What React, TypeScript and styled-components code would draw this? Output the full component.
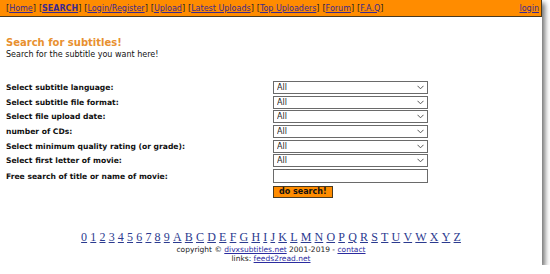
import React from "react";
import styled, { createGlobalStyle } from "styled-components";

const GlobalStyle = createGlobalStyle`
  html, body { margin: 0; padding: 0; background: #ffffff; }
  body { font-family: "DejaVu Sans", Verdana, sans-serif; }
`;

const Window = styled.div`
  width: 542px;
  height: 265px;
  background: #fff;
  box-shadow: 3px 3px 5px rgba(0, 0, 0, 0.55);
  display: flex;
  flex-direction: column;
`;

const TopBar = styled.div`
  height: 16px;
  background: #ff8c00;
  border-bottom: 1px solid #4a3a20;
  border-right: 1px solid #4a3a20;
  display: flex;
  align-items: center;
  justify-content: space-between;
  padding: 0 2px 0 6px;
  font-size: 8px;
  color: #222;
`;

const NavList = styled.div`
  display: flex;
  gap: 3px;
`;

const NavLink = styled.a<{ $bold?: boolean }>`
  color: #3b2a8f;
  text-decoration: underline;
  font-weight: ${(p) => (p.$bold ? "bold" : "normal")};
`;

const Main = styled.div`
  padding: 20px 6px 0 6px;
  flex: 1;
  display: flex;
  flex-direction: column;
`;

const Title = styled.h1`
  margin: 0;
  font-size: 10px;
  font-weight: bold;
  color: #e8902f;
`;

const Intro = styled.p`
  margin: 2px 0 0;
  font-size: 8px;
  color: #111;
`;

const Form = styled.div`
  margin-top: 22px;
  display: grid;
  grid-template-columns: 267px 155px;
  row-gap: 1.7px;
  align-items: center;
`;

const Label = styled.label`
  font-size: 7.6px;
  font-weight: bold;
  color: #111;
  line-height: 13px;
`;

const SelectWrap = styled.div`
  position: relative;
  height: 13px;
`;

const Select = styled.select`
  display: block;
  appearance: none;
  width: 155px;
  height: 13px;
  box-sizing: border-box;
  border: 1px solid #6a6a6a;
  border-radius: 0;
  background: #fff;
  font-family: "DejaVu Sans", sans-serif;
  font-size: 8px;
  color: #222;
  padding: 0 0 0 3px;
  margin: 0;
  line-height: 11px;
`;

const Chevron = styled.svg`
  position: absolute;
  right: 4px;
  top: 4px;
  width: 7px;
  height: 5px;
  pointer-events: none;
`;

const TextInput = styled.input`
  display: block;
  width: 155px;
  height: 14px;
  box-sizing: border-box;
  border: 1px solid #6a6a6a;
  margin: 0;
  padding: 0;
`;

const Button = styled.button`
  grid-column: 2;
  justify-self: start;
  height: 12px;
  box-sizing: border-box;
  padding: 0 5px;
  margin-top: 1px;
  background: #ff8c00;
  border: 1px solid #4a3a20;
  font-family: "DejaVu Sans", sans-serif;
  font-size: 8px;
  font-weight: bold;
  color: #111;
  line-height: 10px;
`;

const Footer = styled.div`
  margin-top: auto;
  padding-bottom: 2px;
  display: flex;
  flex-direction: column;
  align-items: center;
`;

const Letters = styled.div`
  display: flex;
  gap: 3.2px;
  font-family: "Liberation Serif", serif;
  font-size: 12px;
  line-height: 13px;
  margin-bottom: 1px;
`;

const Letter = styled.a`
  color: #2b3a8f;
  text-decoration: underline;
`;

const SmallLine = styled.div`
  font-size: 7.5px;
  color: #222;
  line-height: 9px;
`;

const FootLink = styled.a`
  color: #2b2b9f;
  text-decoration: underline;
`;

const fields = [
  "Select subtitle language:",
  "Select subtitle file format:",
  "Select file upload date:",
  "number of CDs:",
  "Select minimum quality rating (or grade):",
  "Select first letter of movie:",
];

const nav = ["Home", "SEARCH", "Login/Register", "Upload", "Latest Uploads", "Top Uploaders", "Forum", "F.A.Q"];

const letters = "0123456789ABCDEFGHIJKLMNOPQRSTUVWXYZ".split("");

export default function App() {
  return (
    <>
      <GlobalStyle />
      <Window>
        <TopBar>
          <NavList>
            {nav.map((n) => (
              <span key={n}>
                [<NavLink $bold={n === "SEARCH"}>{n}</NavLink>]
              </span>
            ))}
          </NavList>
          <NavLink>login</NavLink>
        </TopBar>
        <Main>
          <Title>Search for subtitles!</Title>
          <Intro>Search for the subtitle you want here!</Intro>
          <Form>
            {fields.map((f) => (
              <React.Fragment key={f}>
                <Label>{f}</Label>
                <SelectWrap>
                  <Select defaultValue="All">
                    <option>All</option>
                  </Select>
                  <Chevron viewBox="0 0 7 5">
                    <path d="M0.5 0.8 L3.5 3.8 L6.5 0.8" fill="none" stroke="#555" strokeWidth="1" />
                  </Chevron>
                </SelectWrap>
              </React.Fragment>
            ))}
            <Label>Free search of title or name of movie:</Label>
            <TextInput type="text" />
            <Button>do search!</Button>
          </Form>
          <Footer>
            <Letters>
              {letters.map((l) => (
                <Letter key={l}>{l}</Letter>
              ))}
            </Letters>
            <SmallLine>
              copyright © <FootLink>divxsubtitles.net</FootLink> 2001-2019 - <FootLink>contact</FootLink>
            </SmallLine>
            <SmallLine>
              links: <FootLink>feeds2read.net</FootLink>
            </SmallLine>
          </Footer>
        </Main>
      </Window>
    </>
  );
}
